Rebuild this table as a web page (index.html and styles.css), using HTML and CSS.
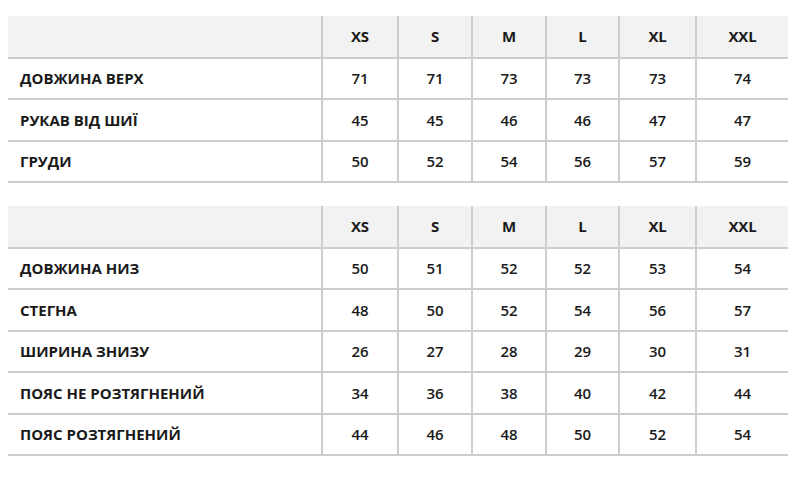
FILE: index.html
```html
<!DOCTYPE html>
<html lang="uk">
<head>
<meta charset="utf-8">
<title>Таблиця розмірів</title>
<link rel="stylesheet" href="styles.css">
</head>
<body>
<main class="page">
  <table class="size-table">
    <thead>
      <tr><th class="label"></th><th>XS</th><th>S</th><th>M</th><th>L</th><th>XL</th><th>XXL</th></tr>
    </thead>
    <tbody>
      <tr><td class="label">ДОВЖИНА ВЕРХ</td><td>71</td><td>71</td><td>73</td><td>73</td><td>73</td><td>74</td></tr>
      <tr><td class="label">РУКАВ ВІД ШИЇ</td><td>45</td><td>45</td><td>46</td><td>46</td><td>47</td><td>47</td></tr>
      <tr><td class="label">ГРУДИ</td><td>50</td><td>52</td><td>54</td><td>56</td><td>57</td><td>59</td></tr>
    </tbody>
  </table>
  <table class="size-table">
    <thead>
      <tr><th class="label"></th><th>XS</th><th>S</th><th>M</th><th>L</th><th>XL</th><th>XXL</th></tr>
    </thead>
    <tbody>
      <tr><td class="label">ДОВЖИНА НИЗ</td><td>50</td><td>51</td><td>52</td><td>52</td><td>53</td><td>54</td></tr>
      <tr><td class="label">СТЕГНА</td><td>48</td><td>50</td><td>52</td><td>54</td><td>56</td><td>57</td></tr>
      <tr><td class="label">ШИРИНА ЗНИЗУ</td><td>26</td><td>27</td><td>28</td><td>29</td><td>30</td><td>31</td></tr>
      <tr><td class="label">ПОЯС НЕ РОЗТЯГНЕНИЙ</td><td>34</td><td>36</td><td>38</td><td>40</td><td>42</td><td>44</td></tr>
      <tr><td class="label">ПОЯС РОЗТЯГНЕНИЙ</td><td>44</td><td>46</td><td>48</td><td>50</td><td>52</td><td>54</td></tr>
    </tbody>
  </table>
</main>
</body>
</html>
```
FILE: styles.css
```css
html, body {
  margin: 0;
  padding: 0;
  background: #ffffff;
}

.page {
  display: flex;
  flex-direction: column;
  gap: 23px;
  padding: 16px 0 0 8px;
  font-family: "Open Sans", "Noto Sans", sans-serif;
  color: #1a1a1a;
}

.size-table {
  width: 780px;
  border-collapse: collapse;
  table-layout: fixed;
}

.size-table th,
.size-table td {
  box-sizing: border-box;
  height: 41.5px;
  padding: 0;
  text-align: center;
  vertical-align: middle;
  font-size: 15px;
  letter-spacing: -0.2px;
  border-bottom: 2px solid #cdcdcd;
  border-left: 2px solid #cdcdcd;
}

.size-table th:first-child,
.size-table td:first-child {
  border-left: none;
}

.size-table thead th {
  background: #f2f2f2;
  font-weight: 700;
}

.size-table td {
  font-weight: 600;
}

.size-table .label {
  text-align: left;
  padding-left: 12px;
  font-weight: 700;
  letter-spacing: 0;
}

.size-table th:nth-child(1) { width: 314px; }
.size-table th:nth-child(2) { width: 76px; }
.size-table th:nth-child(3) { width: 74px; }
.size-table th:nth-child(4) { width: 74px; }
.size-table th:nth-child(5) { width: 73px; }
.size-table th:nth-child(6) { width: 77px; }
.size-table th:nth-child(7) { width: 92px; }
```
